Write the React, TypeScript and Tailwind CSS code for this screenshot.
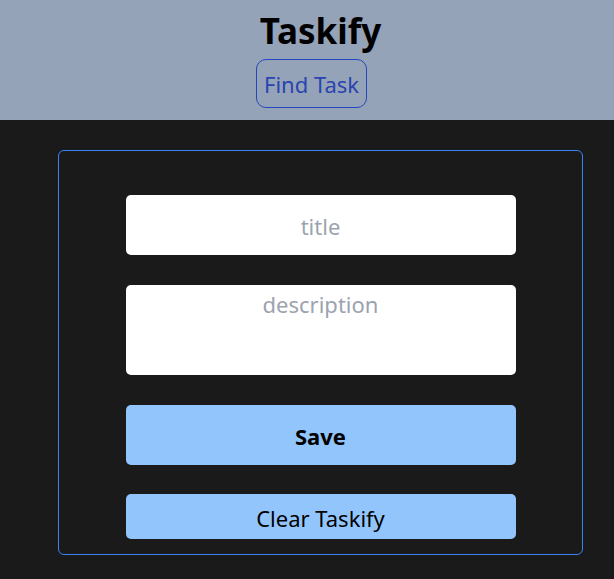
import React from "react";

export default function App() {
  return (
    <div className="min-h-screen bg-[#1a1a1a]" style={{ fontFamily: '"Noto Sans", sans-serif' }}>
      <header className="h-[120px] bg-[#94a3b8] flex flex-col items-center pt-[6px]">
        <h1 className="ml-[27px] text-[35px] leading-[50px] font-bold text-black">Taskify</h1>
        <button className="ml-[9px] mt-[3px] h-[49px] w-[111px] rounded-[10px] border border-[#2447c0] text-[#2a44b0] text-[22px] leading-none">
          Find Task
        </button>
      </header>
      <div className="pt-[30px] pl-[58px] pr-[31px]">
        <div className="w-[525px] h-[405px] rounded-[6px] border border-[#3b82f6] flex flex-col items-center pt-[44px] gap-[30px]">
          <input
            placeholder="title"
            className="w-[390px] h-[60px] rounded-[5px] bg-white text-center text-[22px] text-black placeholder:text-[#9ca3af] outline-none pt-[2px]"
          />
          <textarea
            placeholder="description"
            className="w-[390px] h-[90px] rounded-[5px] bg-white text-center text-[22px] text-black placeholder:text-[#9ca3af] outline-none resize-none pt-[3px]"
          />
          <button className="w-[390px] h-[60px] rounded-[5px] bg-[#93c5fd] text-black text-[22px] font-bold pt-[2px]">
            Save
          </button>
          <button className="w-[390px] h-[45px] rounded-[5px] bg-[#93c5fd] text-black text-[22px] -mt-[1px] pt-[4px]">
            Clear Taskify
          </button>
        </div>
      </div>
    </div>
  );
}
